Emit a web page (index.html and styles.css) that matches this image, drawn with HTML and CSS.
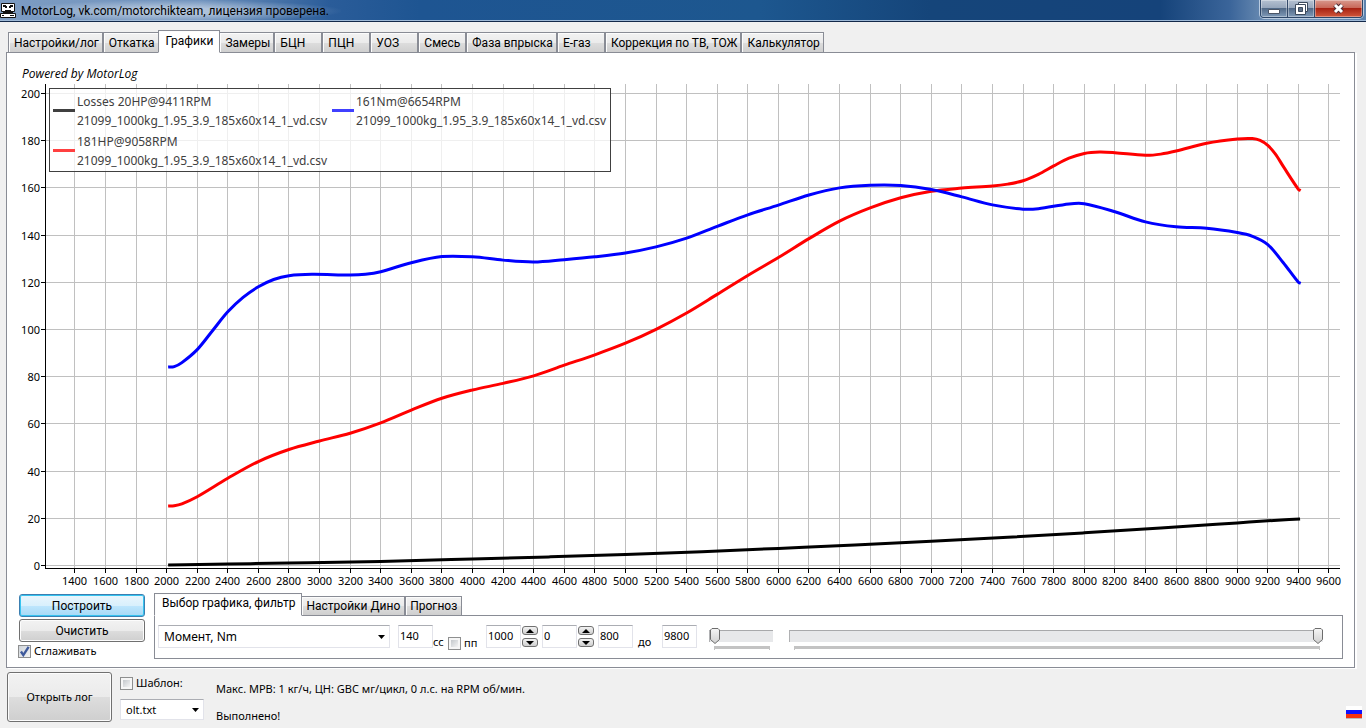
FILE: index.html
```html
<!DOCTYPE html>
<html lang="ru">
<head>
<meta charset="utf-8">
<title>MotorLog</title>
<link rel="stylesheet" href="styles.css">
</head>
<body>
<div class="window">
  <header class="titlebar">
    <svg class="app-icon" viewBox="0 0 16 18" width="16" height="18" aria-hidden="true">
      <path d="M1.500 2.500h13v8h-13z" fill="#fff" stroke="#111"/>
      <path d="M3 4h3v1h1v1h2V5h1V4h3v2h-2v1H9V6H7v1H5V6H3z" fill="#111"/>
      <path d="M5 9.500h6" stroke="#111"/>
      <path d="M3 11.500h10" stroke="#111"/>
      <path d="M.5 12.500h15v4H.5z" fill="#fff" stroke="#111"/>
      <path d="M2 14.500h2M10 14.500h4" stroke="#111"/>
    </svg>
    <h1 class="title">MotorLog, vk.com/motorchikteam, лицензия проверена.</h1>
    <div class="window-buttons">
      <button class="wbtn" type="button" aria-label="Свернуть"><svg width="12" height="5" viewBox="0 0 12 5"><path d="M.5.5h11v4H.5z" fill="#fff" stroke="#4b5566"/></svg></button>
      <button class="wbtn" type="button" aria-label="Развернуть"><svg width="13" height="13" viewBox="0 0 13 13"><path d="M3.500.5h9v9h-9z" fill="#fff" stroke="#3c4a5c"/><path d="M.5 2.500h10v10H.5z" fill="#fff" stroke="#3c4a5c"/><path d="M3.500 5.500h4v4h-4z" fill="#5e7188" stroke="#3c4a5c"/></svg></button>
      <button class="wbtn wbtn-close" type="button" aria-label="Закрыть"><svg width="13" height="11" viewBox="0 0 13 11"><path d="M3 2l7 7M10 2l-7 7" stroke="#4a2b35" stroke-width="5"/><path d="M3 2l7 7M10 2l-7 7" stroke="#fff" stroke-width="3"/></svg></button>
    </div>
  </header>

  <main class="client">
    <nav class="tabs main-tabs" role="tablist">
      <button class="tab" type="button" role="tab">Настройки/лог</button>
      <button class="tab" type="button" role="tab">Откатка</button>
      <button class="tab active" type="button" role="tab" aria-selected="true">Графики</button>
      <button class="tab" type="button" role="tab">Замеры</button>
      <button class="tab" type="button" role="tab">БЦН</button>
      <button class="tab" type="button" role="tab">ПЦН</button>
      <button class="tab" type="button" role="tab">УОЗ</button>
      <button class="tab" type="button" role="tab">Смесь</button>
      <button class="tab" type="button" role="tab">Фаза впрыска</button>
      <button class="tab" type="button" role="tab">Е-газ</button>
      <button class="tab" type="button" role="tab">Коррекция по ТВ, ТОЖ</button>
      <button class="tab" type="button" role="tab">Калькулятор</button>
    </nav>

    <section class="page">
      <p class="powered">Powered by MotorLog</p>
      <div class="chart">
        <svg class="plot" id="plot" role="img" aria-label="Powered by MotorLog"></svg>
        <div class="legend">
          <div class="entry black"><i class="swatch"></i><span>Losses 20HP@9411RPM<br>21099_1000kg_1.95_3.9_185x60x14_1_vd.csv</span></div>
          <div class="entry blue"><i class="swatch"></i><span>161Nm@6654RPM<br>21099_1000kg_1.95_3.9_185x60x14_1_vd.csv</span></div>
          <div class="entry red"><i class="swatch"></i><span>181HP@9058RPM<br>21099_1000kg_1.95_3.9_185x60x14_1_vd.csv</span></div>
        </div>
      </div>

      <div class="controls">
        <div class="actions">
          <button class="btn primary" type="button">Построить</button>
          <button class="btn" type="button">Очистить</button>
          <label class="check"><input type="checkbox" checked>Сглаживать</label>
        </div>
        <div class="options">
          <div class="tabs sub-tabs" role="tablist">
            <button class="tab active" type="button" role="tab" aria-selected="true">Выбор графика, фильтр</button>
            <button class="tab" type="button" role="tab">Настройки Дино</button>
            <button class="tab" type="button" role="tab">Прогноз</button>
          </div>
          <div class="filter">
            <select class="combo combo-chart" aria-label="Выбор графика"><option>Момент, Nm</option></select>
            <input class="num" id="cc" type="text" value="140">
            <label class="low cc" for="cc">сс</label>
            <label class="check low pp"><input type="checkbox">пп</label>
            <input class="num" type="text" value="1000" aria-label="Фильтр 1">
            <span class="spin"><button type="button" class="up" aria-label="Больше"></button><button type="button" class="down" aria-label="Меньше"></button></span>
            <input class="num" type="text" value="0" aria-label="Фильтр 2">
            <span class="spin"><button type="button" class="up" aria-label="Больше"></button><button type="button" class="down" aria-label="Меньше"></button></span>
            <input class="num" type="text" value="800" aria-label="От">
            <label class="low till" for="till">до</label>
            <input class="num" id="till" type="text" value="9800">
            <div class="slider short"><input type="range" min="0" max="100" value="0" aria-label="Сглаживание"><i class="ticks"></i></div>
            <div class="slider long"><input type="range" min="0" max="100" value="100" aria-label="Диапазон"><i class="ticks"></i></div>
          </div>
        </div>
      </div>
    </section>
  </main>

  <footer class="footer">
    <button class="btn open" type="button">Открыть лог</button>
    <div class="template">
      <label class="check"><input type="checkbox">Шаблон:</label>
      <select class="combo" aria-label="Шаблон"><option>olt.txt</option></select>
    </div>
    <div class="status">
      <p>Макс. МРВ: 1 кг/ч, ЦН: GBC мг/цикл, 0 л.с. на RPM об/мин.</p>
      <p>Выполнено!</p>
    </div>
    <svg class="flag" width="16" height="13" viewBox="0 0 16 13" aria-hidden="true"><path d="M0 12h16v1H0z" fill="#bbb"/><path d="M0 0h16v4H0z" fill="#fff"/><path d="M0 4h16v4H0z" fill="#0d12ff"/><path d="M0 8h16v4H0z" fill="#f5320f"/></svg>
  </footer>
</div>
<script src="chart.js"></script>
</body>
</html>
```
FILE: styles.css
```css
* { box-sizing: border-box; }
body {
  margin: 0;
  background: #f0f0f0;
  color: #000;
  font: 11px/16px "Noto Sans", "Open Sans", sans-serif;
}
button, input, select { font: inherit; color: inherit; margin: 0; }
p, h1 { margin: 0; }
.window { min-height: 100vh; display: flex; flex-direction: column; }

/* Title bar */
.titlebar {
  height: 22px;
  flex: none;
  display: flex;
  align-items: flex-start;
  background: linear-gradient(90deg, #7d9cc2 0, #6f92bd 200px, #2a5c99 330px, #1e5592 420px, #1d578f 760px, #15457a 930px, #15437a 1160px, #3b659a 1230px, #7f9dbd 1280px, #5c82ad 100%);
  border-bottom: 1px solid #13294a;
  box-shadow: inset 0 -1px #9db8d6;
  overflow: hidden;
}
.app-icon { flex: none; margin-top: 1px; }
.title {
  font: 400 12px/22px Roboto, sans-serif;
  padding: 0 12px 0 5px;
  background: radial-gradient(ellipse at center, rgba(255,255,255,.45) 20%, rgba(255,255,255,0) 72%);
  white-space: nowrap;
}
.window-buttons {
  margin-left: auto;
  margin-right: 3px;
  display: flex;
  height: 18px;
  border: 1px solid #2c4668;
  border-top: 0;
  border-radius: 0 0 4px 4px;
  box-shadow: 0 0 0 1px #b9cbe0;
  overflow: hidden;
}
.wbtn {
  width: 27px;
  padding: 0;
  border: 0;
  border-right: 1px solid #33496a;
  display: flex;
  align-items: center;
  justify-content: center;
  background: linear-gradient(#b5c1d1 0, #97a7bc 45%, #526a88 50%, #7f9ab8 100%);
  box-shadow: inset 0 0 0 1px rgba(255,255,255,.35);
}
.wbtn:first-child svg { margin-top: 5px; }
.wbtn-close {
  width: 47px;
  border-right: 0;
  background: linear-gradient(#d8998d 0, #c9695a 45%, #a82313 50%, #d0573b 100%);
}

/* Tab strips */
.client { flex: 1; display: flex; flex-direction: column; padding: 8px 11px 0 6px; }
.tabs { display: flex; align-items: flex-end; height: 23px; margin-bottom: -1px; position: relative; padding-left: 2px; }
.tab {
  height: 21px;
  min-width: 48px;
  padding: 0 3px 0 5px;
  border: 1px solid #898c95;
  background: linear-gradient(#f2f2f2 0, #ebebeb 50%, #dddddd 51%, #cfcfcf 100%);
  box-shadow: inset 1px 1px #fcfcfc;
  text-align: left;
  white-space: nowrap;
}
.main-tabs .tab { font: 12px/16px Roboto, sans-serif; }
.tab.active {
  height: 23px;
  padding: 0 6px 2px 7px;
  background: #fff;
  border-bottom-color: #fff;
  margin: 0 -1px;
  z-index: 1;
}
.page {
  flex: 1;
  display: flex;
  flex-direction: column;
  background: #fff;
  border: 1px solid #898c95;
  box-shadow: 2px 1px #fff;
}

/* Chart */
.powered { font: italic 12px/16px "Open Sans", sans-serif; padding: 13px 15px 2px; }
.chart { flex: 1; min-height: 300px; position: relative; }
.plot { position: absolute; width: 100%; height: 100%; display: block; }
.plot text { font-size: 11px; fill: #000; }
.plot .grid { fill: none; stroke: #c0c0c0; shape-rendering: crispEdges; }
.plot .axis { fill: none; stroke: #000; shape-rendering: crispEdges; }
.plot .series { fill: none; stroke-width: 3px; stroke-linejoin: round; }
.legend {
  position: absolute;
  left: 42px;
  top: 4px;
  display: grid;
  grid-template-columns: 279px 278px;
  row-gap: 2px;
  padding: 3px 0 1px 3px;
  border: 1px solid #404040;
  background: rgba(255,255,255,.75);
  color: #404040;
  font-size: 12px;
  line-height: 19px;
  white-space: nowrap;
}
.entry { display: flex; align-items: center; gap: 2px; }
.swatch { width: 22px; height: 3px; flex: none; margin-bottom: 2px; }
.black .swatch { background: #404040; }
.blue .swatch { background: #4040ff; }
.red .swatch { background: #ff4040; }

/* Controls under the chart */
.controls { display: flex; align-items: flex-start; gap: 9px; padding: 3px 11px 8px 12px; }
.actions { width: 126px; display: flex; flex-direction: column; gap: 2px; padding-top: 1px; flex: none; }
.actions .btn { font: 12px/16px Roboto, sans-serif; }
.actions .check { margin: -1px 0 0 -1px; }
.btn {
  height: 23px;
  padding: 0;
  border: 1px solid #707070;
  border-radius: 3px;
  background: linear-gradient(#f2f2f2 0, #ebebeb 50%, #dddddd 51%, #cfcfcf 100%);
  box-shadow: inset 0 0 0 1px #fcfcfc;
}
.btn.primary {
  border-color: #3c7fb1;
  background: linear-gradient(#eaf6fd 0, #d9f0fc 50%, #bee6fd 51%, #a7d9f5 100%);
  box-shadow: inset 0 0 0 1px #36c4f0;
}
.check { display: flex; align-items: center; gap: 3px; }
.check input {
  appearance: none;
  width: 13px;
  height: 13px;
  flex: none;
  border: 1px solid #8e8f8f;
  background: linear-gradient(135deg, #c4c8cc, #f4f4f4) content-box, #f6f6f6;
  padding: 2px;
}
.check input:checked {
  background: url("data:image/svg+xml,%3Csvg xmlns='http://www.w3.org/2000/svg' viewBox='0 0 11 11'%3E%3Cpath d='M2.500 5.500l2 3L9 1.500' fill='none' stroke='%233f5a9c' stroke-width='2'/%3E%3C/svg%3E") border-box, linear-gradient(135deg, #cfd4da, #f4f4f4);
}
.options { flex: 1; min-width: 0; }
.sub-tabs { padding-left: 1px; }
.sub-tabs .tab { height: 20px; padding: 0 4px; font: 12px/16px Roboto, sans-serif; }
.sub-tabs .tab.active { height: 23px; padding: 0 6px 3px 7px; }
.filter {
  display: flex;
  align-items: flex-start;
  height: 44px;
  padding: 9px 19px 0 3px;
  border: 1px solid #898c95;
}
.combo {
  appearance: none;
  height: 21px;
  padding: 0 18px 0 5px;
  border: 1px solid #e2e3ea;
  border-top-color: #abadb3;
  border-radius: 0;
  background: #fff url("data:image/svg+xml,%3Csvg xmlns='http://www.w3.org/2000/svg' width='7' height='4'%3E%3Cpath d='M0 0h7L3.500 4z'/%3E%3C/svg%3E") no-repeat right 4px center;
}
.combo-chart { width: 232px; height: 23px; margin-right: 8px; flex: none; font-size: 12px; }
.num {
  width: 35px;
  height: 23px;
  flex: none;
  padding: 0 1px 2px;
  border: 1px solid #e2e3ea;
  border-top-color: #abadb3;
  background: #fff;
}
.low { padding-top: 9px; flex: none; }
.cc { width: 15px; }
.pp { width: 38px; padding-top: 10px; }
.till { width: 29px; padding-left: 5px; }
.spin { display: flex; flex-direction: column; gap: 3px; width: 16px; margin: 1px 4px 0 1px; flex: none; }
.spin button {
  height: 9px;
  padding: 0;
  border: 1px solid #707070;
  border-radius: 3px;
  background: linear-gradient(#f2f2f2, #cfcfcf);
  display: flex;
  align-items: center;
  justify-content: center;
}
.spin button::before { content: ""; border: 4px solid transparent; border-top-width: 0; border-bottom: 4px solid #000; }
.spin .down::before { transform: rotate(180deg); }
.slider { padding-top: 2px; }
.short { width: 64px; margin: 0 16px 0 12px; flex: none; }
.long { flex: 1; min-width: 80px; }
.slider input { appearance: none; display: block; width: 100%; height: 17px; background: none; }
.slider input::-webkit-slider-runnable-track {
  height: 12px;
  background: #e7e8ea;
  border-top: 1px solid #a8a9ab;
  border-left: 1px solid #b0b1b3;
}
.slider input::-webkit-slider-thumb {
  appearance: none;
  width: 10px;
  height: 16px;
  margin-top: -3px;
  background: url("data:image/svg+xml,%3Csvg xmlns='http://www.w3.org/2000/svg' width='10' height='16'%3E%3ClinearGradient id='g' x2='0' y2='1'%3E%3Cstop stop-color='%23f6f6f6'/%3E%3Cstop offset='1' stop-color='%23d0d0d0'/%3E%3C/linearGradient%3E%3Cpath d='M2 .5h6L9.500 2v9.500L5 15.500.5 11.500V2z' fill='url(%23g)' stroke='%236c6c6c'/%3E%3C/svg%3E");
}
.ticks { display: block; height: 4px; margin: 2px 3px 0 5px; border: 1px solid #c3c3c3; border-width: 3px 1px 0; }

/* Status area */
.footer { display: flex; align-items: flex-start; padding: 4px 4px 6px 7px; height: 60px; }
.open { width: 105px; height: 50px; margin-right: 8px; flex: none; }
.template { width: 84px; display: flex; flex-direction: column; gap: 8px; margin-right: 12px; padding-top: 3px; flex: none; }
.status { display: flex; flex-direction: column; gap: 11px; padding-top: 9px; white-space: nowrap; }
.flag { margin: 34px 0 0 auto; flex: none; }
```
FILE: chart.js
```js
const series = [
  { color: '#000', points: [[2010, .3], [2400, .7], [2800, 1.1], [3400, 1.8], [4000, 2.8], [4500, 3.7], [5000, 4.7], [5500, 5.9], [6000, 7.3], [6500, 8.7], [7000, 10.300], [7500, 12], [8000, 13.900], [8500, 15.900], [9000, 18.100], [9200, 19], [9411, 19.800]] },
  { color: '#f00', points: [[2010, 25.300], [2050, 25.400], [2100, 26.200], [2200, 29.200], [2400, 37], [2600, 44.100], [2800, 49.200], [3000, 52.800], [3200, 56.100], [3400, 60.500], [3600, 65.900], [3800, 70.900], [4000, 74.400], [4200, 77.200], [4400, 80.400], [4600, 84.900], [4800, 89.300], [5000, 94.200], [5200, 100.100], [5400, 107], [5600, 114.900], [5800, 122.900], [6000, 130.500], [6200, 138.500], [6400, 145.900], [6600, 151.500], [6800, 155.800], [7000, 158.600], [7200, 159.900], [7400, 160.800], [7500, 161.600], [7600, 163], [7700, 165.700], [7800, 169.300], [7900, 172.600], [8000, 174.600], [8100, 175.200], [8200, 174.900], [8400, 173.800], [8500, 174.300], [8600, 175.600], [8800, 178.900], [9000, 180.700], [9100, 180.900], [9150, 180.100], [9200, 178], [9250, 174.300], [9300, 169.200], [9400, 159.400], [9415, 158.900]] },
  { color: '#00f', points: [[2010, 84.100], [2050, 84.300], [2100, 86], [2200, 91.500], [2300, 99.500], [2400, 107.500], [2500, 113.600], [2600, 118.100], [2700, 121.200], [2800, 122.800], [2950, 123.400], [3200, 123.100], [3300, 123.400], [3400, 124.500], [3600, 128.300], [3800, 130.900], [4000, 130.800], [4200, 129.400], [4400, 128.600], [4600, 129.600], [4800, 130.800], [5000, 132.400], [5200, 135], [5400, 138.700], [5600, 143.700], [5800, 148.600], [6000, 152.700], [6200, 157], [6400, 160], [6600, 161.100], [6800, 161], [7000, 159.300], [7200, 156.200], [7400, 152.800], [7600, 151], [7700, 151.200], [7900, 153.200], [8000, 153.300], [8200, 149.900], [8400, 145.600], [8600, 143.500], [8800, 142.900], [9000, 141.100], [9100, 139.500], [9200, 136], [9300, 128.400], [9400, 120], [9415, 119.600]] }
];
const range = { x0: 1205, x1: 9672, y0: -1, y1: 204 };
const plot = document.getElementById('plot');

function smoothPath(p) {
  const slope = p.map((_, i) => {
    const a = p[Math.max(0, i - 1)], b = p[Math.min(p.length - 1, i + 1)];
    return (b[1] - a[1]) / (b[0] - a[0]);
  });
  let d = `M${p[0]}`;
  for (let i = 1; i < p.length; i++) {
    const a = p[i - 1], b = p[i], h = (b[0] - a[0]) / 3;
    d += `C${a[0] + h},${a[1] + slope[i - 1] * h} ${b[0] - h},${b[1] - slope[i] * h} ${b}`;
  }
  return d;
}

function draw() {
  const left = 38, right = plot.clientWidth - 14, bottom = plot.clientHeight - 22;
  const sx = v => left + (v - range.x0) / (range.x1 - range.x0) * (right - left);
  const sy = v => bottom - (v - range.y0) / (range.y1 - range.y0) * bottom;
  const snap = v => Math.floor(v) + .5;
  let grid = '', axis = `M${left + .5} 0V${bottom + .5}H${right}`, labels = '';
  for (let v = 1400; v <= 9600; v += 200) {
    const x = snap(sx(v));
    grid += `M${x} 0V${bottom}`;
    axis += `M${x} ${bottom}v5`;
    labels += `<text x="${x}" y="${bottom + 17}" text-anchor="middle">${v}</text>`;
  }
  for (let v = 0; v <= 200; v += 20) {
    const y = snap(sy(v));
    grid += `M${left} ${y}H${right}`;
    axis += `M${left - 4} ${y}h4`;
    labels += `<text x="${left - 5}" y="${y + 4}" text-anchor="end">${v}</text>`;
  }
  const lines = series.map(s =>
    `<path class="series" stroke="${s.color}" d="${smoothPath(s.points.map(([x, y]) => [sx(x), sy(y)]))}"/>`).join('');
  plot.innerHTML = `<path class="grid" d="${grid}"/><path class="axis" d="${axis}"/>${labels}${lines}`;
}

draw();
addEventListener('resize', draw);
```
